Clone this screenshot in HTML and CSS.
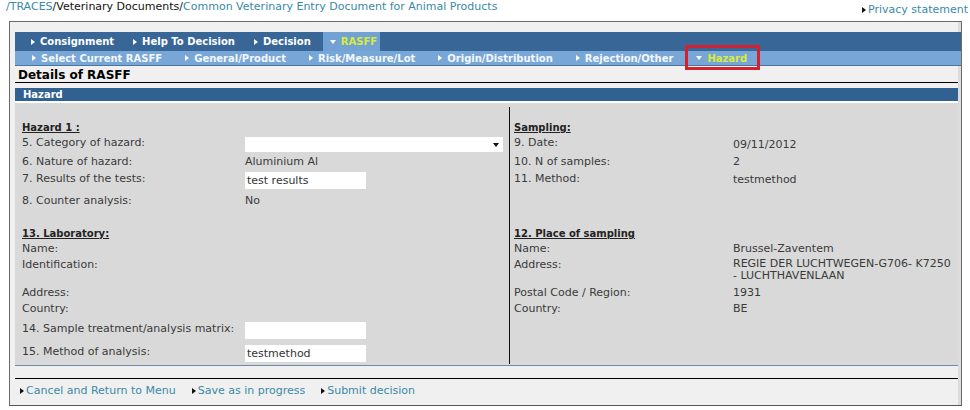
FILE: index.html
```html
<!DOCTYPE html>
<html lang="en">
  <head>
    <meta charset="UTF-8" />
    <title>TRACES - Details of RASFF</title>
    <link rel="stylesheet" href="styles.css">
  </head>
  <body>
    <header class="top">
      <div class="crumbs">
        <a href="#">/TRACES</a>/Veterinary Documents/<a href="#">Common Veterinary Entry Document for Animal Products</a>
      </div>
      <a class="arrow-link privacy" href="#">Privacy statement</a>
    </header>

    <div class="frame">
      <ul class="tabs main-tabs">
        <li>Consignment</li>
        <li>Help To Decision</li>
        <li>Decision</li>
        <li class="active">RASFF</li>
      </ul>
      <ul class="tabs sub-tabs">
        <li>Select Current RASFF</li>
        <li>General/Product</li>
        <li>Risk/Measure/Lot</li>
        <li>Origin/Distribution</li>
        <li>Rejection/Other</li>
        <li class="active marked">Hazard</li>
      </ul>

      <h2 class="title">Details of RASFF</h2>

      <section class="panel">
        <h3 class="panel-head">Hazard</h3>
        <div class="panel-body">
          <div class="col left">
            <div class="group">
              <h4>Hazard 1 :</h4>
              <div class="row sel">
                <span class="label">5. Category of hazard:</span>
                <span class="select"><select></select></span>
              </div>
              <div class="row">
                <span class="label">6. Nature of hazard:</span>
                <span class="val">Aluminium Al</span>
              </div>
              <div class="row inp">
                <span class="label">7. Results of the tests:</span>
                <input value="test results" />
              </div>
              <div class="row">
                <span class="label">8. Counter analysis:</span>
                <span class="val">No</span>
              </div>
            </div>

            <div class="group">
              <h4>13. Laboratory:</h4>
              <div class="row">
                <span class="label">Name:</span>
              </div>
              <div class="row tall">
                <span class="label">Identification:</span>
              </div>
              <div class="row">
                <span class="label">Address:</span>
              </div>
              <div class="row last">
                <span class="label">Country:</span>
              </div>
              <div class="row inp">
                <span class="label">14. Sample treatment/analysis matrix:</span>
                <input value="" />
              </div>
              <div class="row inp">
                <span class="label">15. Method of analysis:</span>
                <input value="testmethod" />
              </div>
            </div>
          </div>

          <div class="col right">
            <div class="group">
              <h4>Sampling:</h4>
              <div class="row sel">
                <span class="label">9. Date:</span>
                <span class="val down">09/11/2012</span>
              </div>
              <div class="row">
                <span class="label">10. N of samples:</span>
                <span class="val">2</span>
              </div>
              <div class="row inp">
                <span class="label">11. Method:</span>
                <span class="val down">testmethod</span>
              </div>
              <div class="row"></div>
            </div>

            <div class="group">
              <h4>12. Place of sampling</h4>
              <div class="row">
                <span class="label">Name:</span>
                <span class="val">Brussel-Zaventem</span>
              </div>
              <div class="row tall">
                <span class="label">Address:</span>
                <span class="val multi">REGIE DER LUCHTWEGEN-G706- K7250<br>- LUCHTHAVENLAAN</span>
              </div>
              <div class="row">
                <span class="label">Postal Code / Region:</span>
                <span class="val">1931</span>
              </div>
              <div class="row last">
                <span class="label">Country:</span>
                <span class="val">BE</span>
              </div>
            </div>
          </div>
        </div>
      </section>

      <nav class="actions">
        <a class="arrow-link" href="#">Cancel and Return to Menu</a>
        <a class="arrow-link" href="#">Save as in progress</a>
        <a class="arrow-link" href="#">Submit decision</a>
      </nav>
    </div>
  </body>
</html>
```

FILE: styles.css
```css
body {
  margin: 0;
  font-family: "DejaVu Sans", Verdana, sans-serif;
  font-size: 11px;
  line-height: 13px;
  color: #3a3a3a;
  background: #fff;
}

a {
  color: #3a8aa6;
  text-decoration: none;
}

.arrow-link {
  display: inline-flex;
  align-items: center;
  gap: 2px;

  &::before {
    content: "";
    border-left: 4px solid #111;
    border-top: 3.5px solid transparent;
    border-bottom: 3.5px solid transparent;
  }
}

.top {
  height: 21px;
  display: flex;
  justify-content: space-between;
  padding: 0 2px 0 6px;

  .crumbs {
    color: #111;
  }

  .privacy {
    padding-top: 3px;
    align-self: flex-start;
  }
}

.frame {
  width: 943px;
  margin-left: 9px;
  padding: 10px 3px 0 5px;
  background: #f0f0f0;
  border: 1px solid #6a6a6a;
  border-bottom-color: #555;
  box-shadow: inset -3px 0 0 #dcdcdc;
}

.tabs {
  display: flex;
  list-style: none;
  margin: 0 -3px 0 0;
  padding: 0;
  font-size: 10px;
  font-weight: bold;
  color: #fff;

  li {
    position: relative;
    display: flex;
    align-items: center;
    gap: 5px;

    &::before {
      content: "";
      border-left: 4px solid #fff;
      border-top: 3.5px solid transparent;
      border-bottom: 3.5px solid transparent;
    }

    &.active {
      color: #d8ec3c;

      &::before {
        border-left: 3.5px solid transparent;
        border-right: 3.5px solid transparent;
        border-top: 4px solid #fff;
        border-bottom: 0;
      }
    }
  }
}

.main-tabs {
  height: 19px;
  background: #376697;
  padding-left: 9px;
  gap: 8px;

  li {
    padding: 0 4px 0 7px;

    &.active {
      background: #72a2d3;
      padding-right: 3px;
    }
  }
}

.sub-tabs {
  height: 14px;
  background: #78a7d7;
  border-bottom: 1px solid #4a76a3;
  padding-left: 17px;
  gap: 23px;
  color: #f4f7fb;

  /* red highlight drawn around the current sub tab */
  li.marked::after {
    content: "";
    position: absolute;
    left: -11px;
    right: -13px;
    top: -6px;
    bottom: -5px;
    border: 3px solid #d3222e;
  }
}

.title {
  margin: 0;
  padding: 3px 0 0 3px;
  font-size: 12px;
  line-height: 13px;
  color: #000;
  border-bottom: 1px solid #000;
}

.panel {
  margin-top: 5px;
  border-bottom: 1px solid #6b8cab;
}

.panel-head {
  margin: 0;
  height: 13px;
  padding-left: 8px;
  background: #306191;
  border-bottom: 2px solid #fff;
  font-size: 10px;
  line-height: 13px;
  color: #fff;
}

.panel-body {
  display: grid;
  grid-template-columns: 494px 1fr;
  background: #d9d9d9;
  height: 262px;
}

.col {
  &.left {
    padding: 18px 0 0 7px;
  }

  &.right {
    margin: 4px 0 3px;
    padding: 14px 0 0 4px;
    border-left: 1px solid #111;
  }
}

.group + .group {
  margin-top: 17px;
}

h4 {
  margin: 0;
  height: 15px;
  font-size: 10px;
  line-height: 13px;
  color: #222;
  text-decoration: underline;
}

.row {
  display: flex;
  align-items: flex-start;
  height: 16px;

  &.sel {
    height: 19px;
  }

  &.inp {
    height: 23px;

    .label {
      padding-top: 1px;
    }
  }

  &.tall {
    height: 28px;
  }

  &.last {
    height: 19px;
  }

  .label {
    flex: none;
  }

  .val.down {
    padding-top: 2px;
  }

  .val.multi {
    line-height: 12px;
  }
}

.left .label {
  width: 223px;
}

.right .label {
  width: 219px;
}

.select {
  position: relative;
  margin-top: 1px;

  select {
    display: block;
    appearance: none;
    width: 258px;
    height: 15px;
    border: 0;
    background: #fff;
  }

  &::after {
    content: "";
    position: absolute;
    right: 4px;
    top: 6px;
    border-left: 3.5px solid transparent;
    border-right: 3.5px solid transparent;
    border-top: 4px solid #111;
  }
}

input {
  width: 117px;
  height: 17px;
  margin-top: 1px;
  padding: 0 2px;
  border: 0;
  background: #fff;
  font: inherit;
  color: #333;
}

.actions {
  margin-top: 12px;
  border-top: 1px solid #000;
  padding: 5px 0 7px 5px;
  display: flex;
  gap: 16px;
  line-height: 14px;
}
```
